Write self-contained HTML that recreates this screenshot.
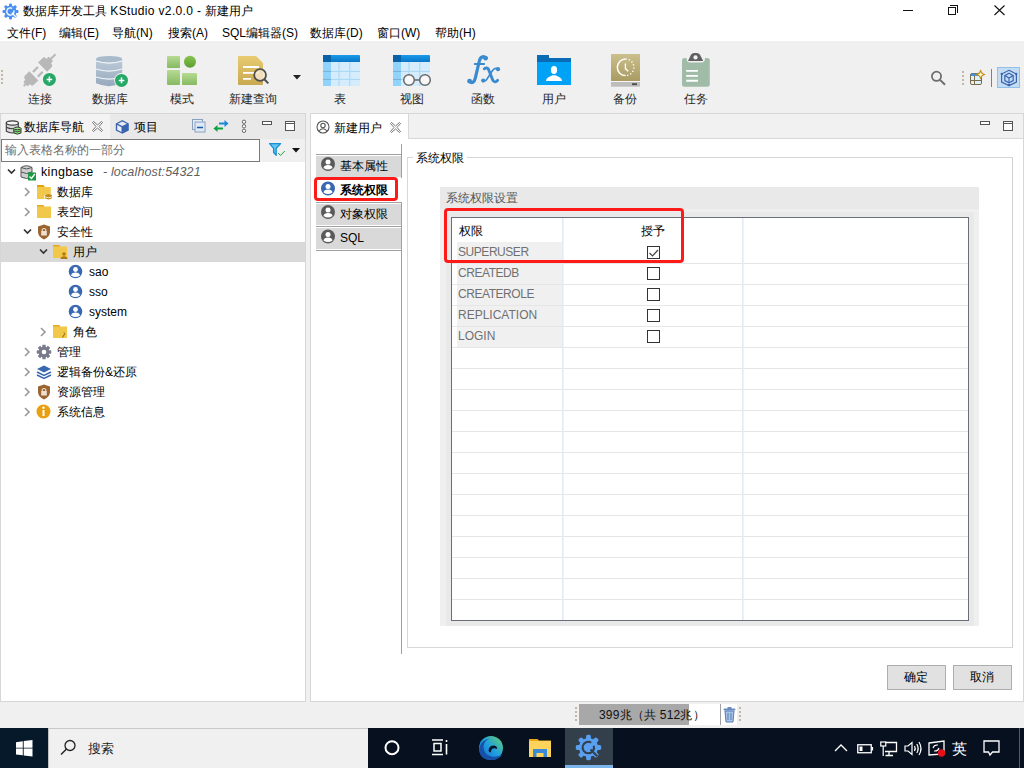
<!DOCTYPE html>
<html><head><meta charset="utf-8">
<style>
*{box-sizing:border-box}
html,body{margin:0;padding:0;width:1024px;height:768px;overflow:hidden;background:#f0f0f0;font-family:"Liberation Sans",sans-serif;font-size:12px;color:#000}
.a{position:absolute;white-space:nowrap;line-height:14px;}
svg{position:absolute;overflow:visible}
.tb{color:#262626;text-shadow:none}
.tr{color:#000}
</style></head><body>
<!-- ============ TITLE + MENU ============ -->
<div class="a" style="left:0;top:0;width:1024px;height:41px;background:#fff"></div>
<svg style="left:2px;top:3px" width="17" height="17" viewBox="0 0 17 17">
  <g fill="#4a90f0">
    <circle cx="8.5" cy="8.5" r="6"/>
    <g id="teeth">
    <rect x="7" y="0.5" width="3" height="3.5" rx="1"/>
    <rect x="7" y="13" width="3" height="3.5" rx="1"/>
    <rect x="0.5" y="7" width="3.5" height="3" rx="1"/>
    <rect x="13" y="7" width="3.5" height="3" rx="1"/>
    <rect x="7" y="0.5" width="3" height="3.5" rx="1" transform="rotate(45 8.5 8.5)"/>
    <rect x="7" y="13" width="3" height="3.5" rx="1" transform="rotate(45 8.5 8.5)"/>
    <rect x="0.5" y="7" width="3.5" height="3" rx="1" transform="rotate(45 8.5 8.5)"/>
    <rect x="13" y="7" width="3.5" height="3" rx="1" transform="rotate(45 8.5 8.5)"/>
    </g>
  </g>
  <path d="M10.2 5.4 A3.6 3.6 0 1 0 11.8 7.4" fill="none" stroke="#fff" stroke-width="1.3"/>
  <path d="M9.8 9.8 L14 14" stroke="#fff" stroke-width="1.3"/>
</svg>
<div class="a" style="left:23px;top:4px">数据库开发工具 <span style="letter-spacing:.35px">KStudio v2.0.0 - </span>新建用户</div>
<!-- window controls -->
<div class="a" style="left:903px;top:10px;width:10px;height:1px;background:#111"></div>
<div class="a" style="left:950px;top:5px;width:8px;height:8px;border:1px solid #111;border-left:none;border-bottom:none"></div>
<div class="a" style="left:948px;top:7px;width:8px;height:8px;border:1px solid #111;background:#fff"></div>
<svg style="left:994px;top:5px" width="11" height="10"><path d="M0.5 0.5 L10.5 10 M10.5 0.5 L0.5 10" stroke="#111" stroke-width="1.1"/></svg>

<div class="a" style="left:7px;top:26px">文件(F)</div>
<div class="a" style="left:59px;top:26px">编辑(E)</div>
<div class="a" style="left:112px;top:26px">导航(N)</div>
<div class="a" style="left:168px;top:26px">搜索(A)</div>
<div class="a" style="left:222px;top:26px">SQL编辑器(S)</div>
<div class="a" style="left:310px;top:26px">数据库(D)</div>
<div class="a" style="left:377px;top:26px">窗口(W)</div>
<div class="a" style="left:435px;top:26px">帮助(H)</div>

<!-- ============ TOOLBAR ============ -->
<!-- grip -->
<svg style="left:1px;top:70px" width="3" height="16"><g fill="#c4b8a4"><rect x="0" y="0" width="2" height="2"/><rect x="0" y="4" width="2" height="2"/><rect x="0" y="8" width="2" height="2"/><rect x="0" y="12" width="2" height="2"/></g></svg>

<!-- connect -->
<svg style="left:15px;top:48px" width="50" height="44" viewBox="15 48 50 44">
  <defs><linearGradient id="pg" gradientUnits="userSpaceOnUse" x1="0" y1="54" x2="0" y2="86"><stop offset="0" stop-color="#b8b8b8"/><stop offset="1" stop-color="#8a8a8a"/></linearGradient></defs>
  <g transform="translate(38.2 71.5) rotate(-45)" fill="url(#pg)">
    <path d="M6.2 -6.4 H12.5 Q14.8 -6.4 14.8 -4 V4 Q14.8 6.4 12.5 6.4 H6.2 Z"/>
    <rect x="14" y="-3.2" width="4" height="6.4" rx="1"/>
    <rect x="17" y="-1" width="7.5" height="2"/>
    <path d="M-6.2 -6.4 H-12.5 Q-14.8 -6.4 -14.8 -4 V4 Q-14.8 6.4 -12.5 6.4 H-6.2 Z"/>
    <rect x="-18" y="-3.2" width="4" height="6.4" rx="1"/>
    <rect x="-20.5" y="-1" width="3.5" height="2"/>
    <rect x="-4" y="-4.5" width="7" height="2.2"/>
    <rect x="-4" y="2.3" width="7" height="2.2"/>
  </g>
  <circle cx="49.4" cy="79.4" r="7.2" fill="#f4f4f4"/>
  <circle cx="49.4" cy="79.4" r="6.5" fill="#27a866"/>
  <path d="M49.4 76.6 V82.2 M46.6 79.4 H52.2" stroke="#fff" stroke-width="1.5"/>
</svg>
<!-- database -->
<svg style="left:88px;top:48px" width="50" height="44" viewBox="88 48 50 44">
  <defs><linearGradient id="dbg" x1="0" y1="0" x2="0" y2="1"><stop offset="0" stop-color="#bccbd9"/><stop offset="1" stop-color="#97a9bd"/></linearGradient></defs>
  <path d="M96 59.2 V83.3 Q109 89 122.2 83.3 V59.2 Z" fill="url(#dbg)"/>
  <ellipse cx="109.1" cy="59.2" rx="13.1" ry="3.3" fill="#a9bacb"/>
  <path d="M96 61 Q109 65.2 122.2 61 M96 69 Q109 73.2 122.2 69 M96 77 Q109 81.2 122.2 77" stroke="#f2f5f8" stroke-width="1.3" fill="none"/>
  <circle cx="121.5" cy="80.4" r="7.3" fill="#f6f6f6"/>
  <circle cx="121.5" cy="80.4" r="6.5" fill="#27a866"/>
  <path d="M121.5 77.6 V83.2 M118.7 80.4 H124.3" stroke="#fff" stroke-width="1.5"/>
</svg>
<!-- schema -->
<svg style="left:166px;top:55px" width="32" height="32" viewBox="0 0 32 32">
  <defs><linearGradient id="sg" x1="0" y1="0" x2="0" y2="1"><stop offset="0" stop-color="#b6da92"/><stop offset="1" stop-color="#86ba62"/></linearGradient>
  <linearGradient id="sc" x1="0" y1="0" x2="0" y2="1"><stop offset="0" stop-color="#88c44e"/><stop offset="1" stop-color="#5c9c30"/></linearGradient></defs>
  <rect x="1" y="1" width="13" height="12" rx="1" fill="url(#sg)"/>
  <circle cx="24" cy="6.8" r="6" fill="url(#sc)"/>
  <rect x="1" y="15" width="13" height="15" rx="1" fill="url(#sg)"/>
  <rect x="16" y="18" width="15" height="12" rx="1" fill="url(#sg)"/>
</svg>
<!-- new query -->
<svg style="left:237px;top:55px" width="34" height="32" viewBox="0 0 34 32">
  <defs><linearGradient id="qg" x1="0" y1="0" x2="0" y2="1"><stop offset="0" stop-color="#e8cc70"/><stop offset="1" stop-color="#c8a850"/></linearGradient></defs>
  <path d="M1 2 Q1 1 2 1 H19 L26 8 V29 Q26 30 25 30 H2 Q1 30 1 29 Z" fill="url(#qg)"/>
  <path d="M6 12 H22 M6 17.8 H22 M6 23.8 H14" stroke="#fff" stroke-width="1.8"/>
  <circle cx="23.1" cy="20" r="5.9" fill="rgba(246,232,204,.85)" stroke="#505050" stroke-width="1.8"/>
  <path d="M27.3 24.2 L31.3 28.4" stroke="#505050" stroke-width="2"/>
</svg>
<svg style="left:293px;top:75px" width="9" height="5"><path d="M0 0 H8 L4 4.5 Z" fill="#222"/></svg>
<!-- table -->
<svg style="left:323px;top:55px" width="38" height="32" viewBox="0 0 38 32">
  <defs><linearGradient id="thg" x1="0" y1="0" x2="0" y2="1"><stop offset="0" stop-color="#1c9aea"/><stop offset="1" stop-color="#0876c6"/></linearGradient></defs>
  <rect x="0" y="0" width="37" height="31" rx="1" fill="#d4ecfc"/>
  <rect x="0" y="7" width="8" height="24" fill="#90d4fc"/>
  <path d="M0 0 H36 Q37 0 37 1 V7 H0 Z" fill="url(#thg)"/>
  <rect x="0" y="0" width="8" height="7" fill="#0a62a8"/>
  <path d="M16 7 V31 M26.8 7 V31 M0 16.4 H37 M0 24.4 H37" stroke="#a8d6f2" stroke-width="1"/>
  <path d="M0 16.4 H8 M0 24.4 H8" stroke="#78aed4" stroke-width="1"/>
</svg>
<!-- view -->
<svg style="left:393px;top:55px" width="38" height="32" viewBox="0 0 38 32">
  <rect x="0" y="0" width="37" height="31" rx="1" fill="#d4ecfc"/>
  <rect x="0" y="7" width="8" height="24" fill="#90d4fc"/>
  <path d="M0 0 H36 Q37 0 37 1 V7 H0 Z" fill="url(#thg)"/>
  <rect x="0" y="0" width="8" height="7" fill="#0a62a8"/>
  <path d="M16 7 V31 M26.8 7 V31 M0 16.4 H37 M0 24.4 H37" stroke="#a8d6f2" stroke-width="1"/>
  <path d="M0 16.4 H8 M0 24.4 H8" stroke="#78aed4" stroke-width="1"/>
  <circle cx="16" cy="25" r="5.3" fill="#f8f8f8" stroke="#6a6a6a" stroke-width="1.5"/>
  <circle cx="32" cy="25" r="5.3" fill="#f8f8f8" stroke="#6a6a6a" stroke-width="1.5"/>
  <path d="M21.3 25 H26.7" stroke="#6a6a6a" stroke-width="1.5"/>
</svg>
<!-- fx -->
<svg style="left:460px;top:50px" width="46" height="40" viewBox="460 50 46 40">
  <g fill="none" stroke="#3a8ad0" stroke-linecap="round">
    <path d="M486 57.8 C483.5 55.6, 480.2 56.8, 479.2 61.5 L475.3 78.2 C474.3 82.6, 471.8 83.6, 469.6 81.4" stroke-width="3.2"/>
    <path d="M474.7 64 H484.2" stroke-width="1.8"/>
    <path d="M484.3 68.8 C486.5 67, 488.2 68, 489.2 71 L492.6 79.8 C493.6 82.4, 495.8 82.6, 497.6 80.4" stroke-width="2.9"/>
    <path d="M498 69.2 C496 67.6, 494 68.6, 492.2 71 L487 79 C486 80.8, 484.6 81.4, 483.2 80.6" stroke-width="1.6"/>
  </g>
  <g fill="#3a8ad0"><circle cx="485.6" cy="58.3" r="2.3"/><circle cx="469.6" cy="81.2" r="2.4"/><circle cx="498" cy="69.2" r="2.1"/><circle cx="483.2" cy="80.6" r="2.1"/></g>
</svg>
<!-- user -->
<svg style="left:536px;top:54px" width="36" height="32" viewBox="536 54 36 32">
  <rect x="537" y="55" width="12" height="4" fill="#0a6cb4"/>
  <rect x="537" y="58" width="34" height="4" fill="#0a6cb4"/>
  <rect x="537" y="62" width="34" height="23" fill="#00a2f6"/>
  <ellipse cx="554" cy="70" rx="3.1" ry="3.9" fill="#fff"/>
  <path d="M546 81 Q546 78.5 548.5 77.3 L552.5 75.2 H555.5 L559.5 77.3 Q562 78.5 562 81 Z" fill="#fff"/>
</svg>
<!-- backup -->
<svg style="left:606px;top:50px" width="40" height="40" viewBox="606 50 40 40">
  <defs><linearGradient id="bg1" x1="0" y1="0" x2="0" y2="1"><stop offset="0" stop-color="#cbbf8c"/><stop offset="1" stop-color="#a99b62"/></linearGradient></defs>
  <rect x="611" y="54" width="29" height="27" fill="url(#bg1)"/>
  <rect x="611" y="81" width="29" height="1" fill="#f4f4f4"/>
  <rect x="611" y="82" width="29" height="4.7" fill="#bdbdbd"/>
  <rect x="632" y="83.3" width="5" height="1.8" fill="#4a4a4a"/>
  <path d="M625.6 59 A8.3 8.3 0 0 0 625.6 75.6" fill="none" stroke="#fff" stroke-width="1.5"/>
  <path d="M625.6 59 A8.3 8.3 0 0 1 625.6 75.6" fill="none" stroke="#fff" stroke-width="1.5" stroke-dasharray="1.2 2.1"/>
  <path d="M625.4 63.5 V68.6 L628.2 71.3" fill="none" stroke="#fff" stroke-width="1.4"/>
</svg>
<!-- task -->
<svg style="left:678px;top:50px" width="36" height="40" viewBox="678 50 36 40">
  <rect x="682" y="58" width="27.8" height="28.7" rx="2.5" fill="#a0bca8"/>
  <path d="M686.5 58 Q686.5 62.5 690 62.5 H701.5 Q705 62.5 705 58 Z" fill="#f0f0f0"/>
  <path d="M688 60.9 L691 54.8 Q692 52.9 694.2 52.9 H696.8 Q699 52.9 700 54.8 L703.2 60.9 Z" fill="#606060"/>
  <circle cx="695.5" cy="57.4" r="2.1" fill="#f4f4f4"/>
  <path d="M686.2 70.9 H697.9 M686.2 75.9 H697.9 M686.2 80.8 H697.9" stroke="#fff" stroke-width="1.9"/>
</svg>

<div class="a tb" style="left:28px;top:92px">连接</div>
<div class="a tb" style="left:92px;top:92px">数据库</div>
<div class="a tb" style="left:170px;top:92px">模式</div>
<div class="a tb" style="left:229px;top:92px">新建查询</div>
<div class="a tb" style="left:334px;top:92px">表</div>
<div class="a tb" style="left:400px;top:92px">视图</div>
<div class="a tb" style="left:471px;top:92px">函数</div>
<div class="a tb" style="left:542px;top:92px">用户</div>
<div class="a tb" style="left:613px;top:92px">备份</div>
<div class="a tb" style="left:684px;top:92px">任务</div>

<!-- right toolbar -->
<svg style="left:930px;top:70px" width="17" height="17"><circle cx="6.5" cy="6.3" r="4.6" fill="none" stroke="#6e6e6e" stroke-width="1.8"/><path d="M9.8 9.6 L15 14.8" stroke="#6e6e6e" stroke-width="2"/></svg>
<svg style="left:962px;top:71px" width="2" height="15"><g fill="#c4b8a4"><rect x="0" y="0" width="2" height="2"/><rect x="0" y="4" width="2" height="2"/><rect x="0" y="8" width="2" height="2"/><rect x="0" y="12" width="2" height="2"/></g></svg>
<svg style="left:966px;top:68px" width="20" height="20" viewBox="966 68 20 20">
  <rect x="970.5" y="73.5" width="11" height="11" rx="1.5" fill="#ddf0fc" stroke="#7a6a48" stroke-width="1"/>
  <path d="M970.5 75 Q970.5 73.5 972 73.5 H980 Q981.5 73.5 981.5 75 V76 H970.5 Z" fill="#4a8ed0"/>
  <path d="M974.5 76 V84.5 M970.5 80.5 H981.5" stroke="#7a6a48" stroke-width="1"/>
  <path d="M980.6 70.2 Q981.2 73.9 984.9 74.5 Q981.2 75.1 980.6 78.8 Q980 75.1 976.3 74.5 Q980 73.9 980.6 70.2 Z" fill="#fff6d0" stroke="#c09020" stroke-width="1.1" stroke-linejoin="round"/>
</svg>
<div class="a" style="left:991px;top:69px;width:1px;height:18px;background:#808080"></div>
<div class="a" style="left:997px;top:67px;width:23px;height:21px;background:#c4dcf2;border:1px solid #90c0ee"></div>
<svg style="left:998px;top:68px" width="22" height="20" viewBox="998 68 22 20">
  <path d="M1009 70.3 L1016.4 74 V82 L1009 85.6 L1001.6 82 V74 Z" fill="none" stroke="#3a64b0" stroke-width="1.2"/>
  <circle cx="1001.8" cy="74" r="1.2" fill="#3a64b0"/><circle cx="1016.2" cy="74" r="1.2" fill="#3a64b0"/><circle cx="1009" cy="85" r="1.3" fill="#3a64b0"/>
  <path d="M1009 73.3 L1013.2 75.6 V80.6 L1009 82.9 L1004.8 80.6 V75.6 Z" fill="none" stroke="#3a64b0" stroke-width="1.2"/>
  <path d="M1004.8 75.6 L1009 78 L1013.2 75.6 M1009 78 V82.9" fill="none" stroke="#3a64b0" stroke-width="1.1"/>
</svg>

<!-- ============ LEFT PANEL ============ -->
<div class="a" style="left:0;top:113px;width:306px;height:589px;background:#fff;border:1px solid #d6d6d6"></div>
<div class="a" style="left:1px;top:114px;width:304px;height:25px;background:#e9e9e9"></div>
<div class="a" style="left:1px;top:114px;width:109px;height:25px;background:#f3f3f3"></div>
<!-- tab 1 icon -->
<svg style="left:4px;top:119px" width="20" height="17" viewBox="4 119 20 17">
  <path d="M6.3 123 V131.3 Q12.3 134.6 18.3 131.3 V123 Z" fill="#d8d8d8" stroke="#3e3e3e" stroke-width="1.1"/>
  <ellipse cx="12.3" cy="123" rx="6" ry="2.1" fill="#f6f6f6" stroke="#3e3e3e" stroke-width="1.1"/>
  <path d="M6.3 127.3 Q12.3 130.3 18.3 127.3" fill="none" stroke="#3e3e3e" stroke-width="1.1"/>
  <path d="M13.8 128.4 V133 Q17.4 135.3 21 133 V128.4 Z" fill="#7ad66a" stroke="#3e3e3e" stroke-width="1"/>
  <ellipse cx="17.4" cy="128.4" rx="3.6" ry="1.3" fill="#9ae88a" stroke="#3e3e3e" stroke-width="1"/>
  <path d="M13.8 130.8 Q17.4 132.8 21 130.8" fill="none" stroke="#3e3e3e" stroke-width="0.9"/>
</svg>
<div class="a" style="left:24px;top:120px">数据库导航</div>
<svg style="left:92px;top:121px" width="11" height="11" viewBox="0 0 11 11"><path d="M0.5 1.5 L1.5 0.5 L5.5 4 L9.5 0.5 L10.5 1.5 L7 5.5 L10.5 9.5 L9.5 10.5 L5.5 7 L1.5 10.5 L0.5 9.5 L4 5.5 Z" fill="#fff" stroke="#666" stroke-width="0.9" stroke-linejoin="round"/></svg>
<svg style="left:114px;top:118px" width="17" height="17" viewBox="114 118 17 17">
  <path d="M122.3 120 L128.8 123.4 V130.4 L122.3 133.7 L115.8 130.4 V123.4 Z" fill="#3a64b0"/>
  <path d="M122.3 121.5 L126.9 123.8 L122.3 126.1 L117.7 123.8 Z" fill="#e6ebf4"/>
  <path d="M117.2 125 L121.5 127.2 V132 L117.2 129.8 Z" fill="#eceff5"/>
</svg>
<div class="a" style="left:134px;top:120px">项目</div>
<!-- panel tools -->
<svg style="left:192px;top:119px" width="14" height="14"><rect x="0.5" y="0.5" width="10" height="10" fill="#e4ecf4" stroke="#8aa0c0"/><rect x="3" y="3" width="10" height="10" fill="#dfe9f4" stroke="#8aa0c0"/><path d="M5 8.5 H11" stroke="#1a5aa8" stroke-width="1.5"/></svg>
<svg style="left:213px;top:120px" width="16" height="12"><path d="M3.5 8.5 H10" stroke="#10a040" stroke-width="2"/><path d="M0.5 8.5 L4.5 5 V12 Z" fill="#10a040"/><path d="M6 3.5 H12" stroke="#1a88d8" stroke-width="2"/><path d="M15.5 3.5 L11.5 0 V7 Z" fill="#1a88d8"/></svg>
<svg style="left:241px;top:119px" width="6" height="15"><circle cx="3" cy="2.8" r="1.7" fill="#fff" stroke="#666" stroke-width="1"/><circle cx="3" cy="7.3" r="1.7" fill="#fff" stroke="#666" stroke-width="1"/><circle cx="3" cy="11.8" r="1.7" fill="#fff" stroke="#666" stroke-width="1"/></svg>
<div class="a" style="left:262px;top:121px;width:10px;height:4px;border:1px solid #555;background:#fff"></div>
<div class="a" style="left:285px;top:121px;width:10px;height:10px;border:1px solid #555;background:#fff;box-shadow:inset 0 1px 0 #fff,inset 0 2px 0 #555"></div>

<div class="a" style="left:1px;top:139px;width:304px;height:23px;background:#f0f0f0"></div>
<div class="a" style="left:1px;top:139px;width:259px;height:23px;background:#fff;border:1px solid #7a7a7a"></div>
<div class="a" style="left:5px;top:143px;color:#6d6d6d">输入表格名称的一部分</div>
<svg style="left:266px;top:140px" width="22" height="18" viewBox="266 140 22 18">
  <path d="M269.6 143.6 H280.6 L276.2 148.3 V155.3 L273.6 152.5 V148.3 Z" fill="#62c6f0" stroke="#1a8ed6" stroke-width="1.3" stroke-linejoin="round"/>
  <path d="M278.2 153 L280.5 155.4 L284.8 151" fill="none" stroke="#20a040" stroke-width="1"/>
</svg>
<svg style="left:292px;top:148px" width="8" height="5"><path d="M0 0 H8 L4 4.5 Z" fill="#111"/></svg>

<!-- tree -->
<div class="a" style="left:1px;top:242px;width:304px;height:20px;background:#d9d9d9"></div>
<svg style="left:0;top:162px" width="306" height="270" viewBox="0 0 306 270">
  <g fill="none" stroke="#333" stroke-width="1.7">
    <path d="M8 7.5 L11.5 11 L15 7.5"/>
    <path d="M24 67.5 L27.5 71 L31 67.5"/>
    <path d="M40 87.5 L43.5 91 L47 87.5"/>
  </g>
  <g fill="none" stroke="#999" stroke-width="1.6">
    <path d="M25 26 L29 30 L25 34"/>
    <path d="M25 46 L29 50 L25 54"/>
    <path d="M41 166 L45 170 L41 174"/>
    <path d="M25 186 L29 190 L25 194"/>
    <path d="M25 206 L29 210 L25 214"/>
    <path d="M25 226 L29 230 L25 234"/>
    <path d="M25 246 L29 250 L25 254"/>
  </g>
</svg>
<!-- kingbase icon -->
<svg style="left:20px;top:164px" width="17" height="17" viewBox="0 0 17 17">
  <path d="M1 3.5 Q6.5 0 12 3.5 V13 Q6.5 16 1 13 Z" fill="#cfcfcf" stroke="#555" stroke-width="1"/>
  <path d="M1 3.5 Q6.5 6.5 12 3.5 M1 8 Q6.5 11 12 8" stroke="#555" stroke-width="1" fill="none"/>
  <rect x="8" y="8.5" width="8" height="8" fill="#1a9a40"/>
  <path d="M9.5 12.5 L11.5 14.5 L14.8 10" stroke="#fff" stroke-width="1.3" fill="none"/>
</svg>
<div class="a" style="left:41px;top:165px;font-size:12.5px;letter-spacing:.3px">kingbase</div>
<div class="a" style="left:103px;top:165px;font-style:italic;color:#5f5f5f;font-size:12.5px;letter-spacing:.15px">- localhost:54321</div>
<!-- folder db -->
<svg style="left:37px;top:184px" width="17" height="17" viewBox="0 0 17 17">
  <path d="M0 1 H6.3 L7.8 3 H13.8 V15 H0 Z" fill="#f2c84a"/><path d="M0 1 H6.3 L7.8 3 H0 Z" fill="#e2a20a"/>
  <path d="M7.3 11.2 V14.5 Q11.5 17.4 15.7 14.5 V11.2 Q11.5 8.2 7.3 11.2 Z" fill="#fff"/>
  <path d="M8 11.2 V14.3 Q11.5 16.6 15 14.3 V11.2 Q11.5 8.9 8 11.2 Z" fill="#c48c10"/>
  <path d="M8 12.9 Q11.5 14.6 15 12.9" fill="none" stroke="#fff" stroke-width="0.8"/>
</svg>
<div class="a" style="left:57px;top:185px">数据库</div>
<svg style="left:37px;top:204px" width="17" height="16" viewBox="0 0 17 16"><path d="M0 1 H6 L7.5 2.5 H14 V14 H0 Z" fill="#f2c84a"/><path d="M0 1 H6 L7.5 2.5 H0 Z" fill="#e2a82a"/></svg>
<div class="a" style="left:57px;top:205px">表空间</div>
<svg style="left:37px;top:224px" width="14" height="16" viewBox="0 0 14 16"><path d="M7 0.5 L13 2.5 V8 Q13 13 7 15.5 Q1 13 1 8 V2.5 Z" fill="#9a6530"/><rect x="4.2" y="7" width="5.6" height="4.5" fill="#f0e0d0"/><path d="M5.2 7 V5.5 Q7 3.5 8.8 5.5 V7" stroke="#f0e0d0" stroke-width="1.1" fill="none"/></svg>
<div class="a" style="left:57px;top:225px">安全性</div>
<svg style="left:53px;top:244px" width="17" height="16" viewBox="0 0 17 16">
  <path d="M0 1 H6 L7.5 2.5 H14 V14 H0 Z" fill="#f2c84a"/><path d="M0 1 H6 L7.5 2.5 H0 Z" fill="#e2a82a"/>
  <circle cx="11" cy="10" r="1.8" fill="#b07818"/>
  <path d="M7.5 15 Q7.5 12.2 11 12.2 Q14.5 12.2 14.5 15 Z" fill="#b07818"/>
</svg>
<div class="a" style="left:73px;top:245px">用户</div>
<!-- users -->
<svg style="left:68px;top:264px" width="16" height="60" viewBox="0 0 16 60">
  <g id="u1">
  <circle cx="7.5" cy="7.5" r="6.8" fill="#3a68b0"/>
  <circle cx="7.5" cy="5.5" r="2.4" fill="#fff"/>
  <path d="M3 11.5 Q3.5 8.5 7.5 8.5 Q11.5 8.5 12 11.5 Q7.5 14.5 3 11.5 Z" fill="#fff"/>
  </g>
  <use href="#u1" y="20"/>
  <use href="#u1" y="40"/>
</svg>
<div class="a" style="left:89px;top:265px">sao</div>
<div class="a" style="left:89px;top:285px">sso</div>
<div class="a" style="left:89px;top:305px">system</div>
<svg style="left:53px;top:324px" width="17" height="16" viewBox="0 0 17 16">
  <path d="M0 1 H6 L7.5 2.5 H14 V14 H0 Z" fill="#f2c84a"/><path d="M0 1 H6 L7.5 2.5 H0 Z" fill="#e2a82a"/>
  <path d="M11 8.5 Q12.5 9.5 11 11 L9.5 13.5" stroke="#8a6010" stroke-width="1" fill="none"/>
</svg>
<div class="a" style="left:73px;top:325px">角色</div>
<svg style="left:36px;top:344px" width="16" height="16" viewBox="0 0 16 16">
  <g fill="#7a7a8e">
  <circle cx="8" cy="8" r="5.3"/>
  <rect x="6.3" y="0.8" width="3.4" height="3.5"/><rect x="6.3" y="11.7" width="3.4" height="3.5"/>
  <rect x="0.8" y="6.3" width="3.5" height="3.4"/><rect x="11.7" y="6.3" width="3.5" height="3.4"/>
  <g transform="rotate(45 8 8)"><rect x="6.3" y="0.8" width="3.4" height="3.5"/><rect x="6.3" y="11.7" width="3.4" height="3.5"/><rect x="0.8" y="6.3" width="3.5" height="3.4"/><rect x="11.7" y="6.3" width="3.5" height="3.4"/></g>
  </g>
  <circle cx="8" cy="8" r="2.3" fill="#fff"/>
</svg>
<div class="a" style="left:57px;top:345px">管理</div>
<svg style="left:36px;top:364px" width="16" height="16" viewBox="0 0 16 16">
  <path d="M1 5 L8 1.5 L15 5 L8 8.5 Z" fill="#3a68b0"/>
  <path d="M1 8 L8 11.5 L15 8" stroke="#3a68b0" stroke-width="1.5" fill="none"/>
  <path d="M1 11 L8 14.5 L15 11" stroke="#3a68b0" stroke-width="1.5" fill="none"/>
</svg>
<div class="a" style="left:57px;top:365px">逻辑备份&amp;还原</div>
<svg style="left:37px;top:384px" width="14" height="16" viewBox="0 0 14 16"><path d="M7 0.5 L13 2.5 V8 Q13 13 7 15.5 Q1 13 1 8 V2.5 Z" fill="#9a6530"/><rect x="4.2" y="7" width="5.6" height="4.5" fill="#f0e0d0"/><path d="M5.2 7 V5.5 Q7 3.5 8.8 5.5 V7" stroke="#f0e0d0" stroke-width="1.1" fill="none"/></svg>
<div class="a" style="left:57px;top:385px">资源管理</div>
<svg style="left:36px;top:404px" width="16" height="16" viewBox="0 0 16 16"><circle cx="7.5" cy="7.5" r="7" fill="#e8a010"/><rect x="6.5" y="6" width="2" height="6" fill="#fff"/><circle cx="7.5" cy="3.8" r="1.2" fill="#fff"/></svg>
<div class="a" style="left:57px;top:405px">系统信息</div>

<!-- ============ RIGHT EDITOR ============ -->
<div class="a" style="left:310px;top:113px;width:714px;height:589px;background:#fff;border:1px solid #d6d6d6"></div>
<div class="a" style="left:311px;top:114px;width:712px;height:25px;background:#f1f1f1;border-bottom:1px solid #d8d8d8"></div>
<div class="a" style="left:311px;top:114px;width:98px;height:25px;background:#fff;border-right:1px solid #d8d8d8"></div>
<svg style="left:316px;top:120px" width="14" height="14"><circle cx="7" cy="7" r="6" fill="none" stroke="#555" stroke-width="1.1"/><circle cx="7" cy="5.5" r="2.2" fill="none" stroke="#555" stroke-width="1.1"/><path d="M3 11 Q7 6.5 11 11" fill="none" stroke="#555" stroke-width="1.1"/></svg>
<div class="a" style="left:334px;top:121px">新建用户</div>
<svg style="left:390px;top:122px" width="11" height="11" viewBox="0 0 11 11"><path d="M0.5 1.5 L1.5 0.5 L5.5 4 L9.5 0.5 L10.5 1.5 L7 5.5 L10.5 9.5 L9.5 10.5 L5.5 7 L1.5 10.5 L0.5 9.5 L4 5.5 Z" fill="#fff" stroke="#666" stroke-width="0.9" stroke-linejoin="round"/></svg>
<div class="a" style="left:980px;top:121px;width:10px;height:4px;border:1px solid #555;background:#fff"></div>
<div class="a" style="left:1003px;top:121px;width:10px;height:10px;border:1px solid #555;background:#fff;box-shadow:inset 0 1px 0 #fff,inset 0 2px 0 #555"></div>

<!-- vertical tabs -->
<div class="a" style="left:401px;top:144px;width:1px;height:510px;background:#a0a0a0"></div>
<div class="a" style="left:316px;top:154px;width:86px;height:24px;background:#d9d9d9;border-top:1px solid #a0a0a0;border-right:1px solid #a0a0a0;box-shadow:inset 0 1px 0 #fff,inset 0 -1px 0 #fff"></div>
<div class="a" style="left:316px;top:202px;width:86px;height:24px;background:#d9d9d9;border-top:1px solid #a0a0a0;border-right:1px solid #a0a0a0;box-shadow:inset 0 1px 0 #fff,inset 0 -1px 0 #fff"></div>
<div class="a" style="left:316px;top:226px;width:86px;height:25px;background:#d9d9d9;border-top:1px solid #a0a0a0;border-bottom:1px solid #a0a0a0;border-right:1px solid #a0a0a0;box-shadow:inset 0 1px 0 #fff,inset 0 -1px 0 #fff"></div>
<div class="a" style="left:316px;top:178px;width:86px;height:24px;background:#fff"></div>
<svg style="left:320px;top:156px" width="16" height="90" viewBox="0 0 16 90">
  <g id="vt"><circle cx="8" cy="8" r="7" fill="#5a5a5a"/><circle cx="8" cy="6" r="2.5" fill="#fff"/><path d="M3.5 12 Q4 9 8 9 Q12 9 12.5 12 Q8 15 3.5 12 Z" fill="#fff"/></g>
  <use href="#vt" y="48"/>
  <use href="#vt" y="72.5"/>
  <g transform="translate(0 24.5)"><circle cx="8" cy="8" r="7" fill="#3a68b0"/><circle cx="8" cy="6" r="2.5" fill="#fff"/><path d="M3.5 12 Q4 9 8 9 Q12 9 12.5 12 Q8 15 3.5 12 Z" fill="#fff"/></g>
</svg>
<div class="a" style="left:340px;top:159px">基本属性</div>
<div class="a" style="left:340px;top:183px;font-weight:bold">系统权限</div>
<div class="a" style="left:340px;top:207px">对象权限</div>
<div class="a" style="left:340px;top:231px">SQL</div>
<div class="a" style="left:314px;top:177px;width:84px;height:24px;border:3px solid #ff1a1a;border-radius:4px"></div>

<!-- fieldset -->
<div class="a" style="left:407px;top:157px;width:606px;height:491px;border:1px solid #d8d8d8;border-right-color:#d0d0d0"></div>
<div class="a" style="left:413px;top:151px;background:#fff;padding:0 3px">系统权限</div>

<!-- gray group -->
<div class="a" style="left:440px;top:187px;width:539px;height:439px;background:#efefef"></div>
<div class="a" style="left:440px;top:187px;width:539px;height:22px;background:#e9e9e9"></div>
<div class="a" style="left:446px;top:212px;width:528px;height:414px;background:#e9e9e9"></div>
<div class="a" style="left:446px;top:191px;color:#555">系统权限设置</div>

<!-- table -->
<div class="a" style="left:451px;top:217px;width:518px;height:404px;background:#fff;border:1px solid #6a6e78"></div>
<div class="a" style="left:457px;top:242px;width:106px;height:105px;background:#f0f0f0"></div>
<svg style="left:452px;top:218px" width="516" height="402" viewBox="0 0 516 402">
  <g stroke="#e6e6e6" stroke-width="1">
    <path d="M0 45.5 H516 M0 66.5 H516 M0 87.5 H516 M0 108.5 H516 M0 129.5 H516 M0 150.5 H516 M0 171.5 H516 M0 192.5 H516 M0 213.5 H516 M0 234.5 H516 M0 255.5 H516 M0 276.5 H516 M0 297.5 H516 M0 318.5 H516 M0 339.5 H516 M0 360.5 H516 M0 381.5 H516"/>
  </g>
  <path d="M110.8 0 V402 M290.8 0 V402" stroke="#e2eaf4" stroke-width="1.5"/>
</svg>
<div class="a" style="left:459px;top:224px">权限</div>
<div class="a" style="left:641px;top:224px">授予</div>
<div class="a" style="left:458px;top:245px;color:#707070;letter-spacing:-.45px;text-shadow:none">SUPERUSER</div>
<div class="a" style="left:458px;top:266px;color:#707070;letter-spacing:-.45px;text-shadow:none">CREATEDB</div>
<div class="a" style="left:458px;top:287px;color:#707070;letter-spacing:-.45px;text-shadow:none">CREATEROLE</div>
<div class="a" style="left:458px;top:308px;color:#707070;text-shadow:none">REPLICATION</div>
<div class="a" style="left:458px;top:329px;color:#707070;text-shadow:none">LOGIN</div>
<div class="a" style="left:647px;top:246px;width:13px;height:13px;border:1px solid #333;background:#fff"></div>
<svg style="left:649px;top:249px" width="10" height="8"><path d="M0.5 4 L3.5 7 L9 1" fill="none" stroke="#444" stroke-width="1.2"/></svg>
<div class="a" style="left:647px;top:267px;width:13px;height:13px;border:1px solid #333;background:#fff"></div>
<div class="a" style="left:647px;top:288px;width:13px;height:13px;border:1px solid #333;background:#fff"></div>
<div class="a" style="left:647px;top:309px;width:13px;height:13px;border:1px solid #333;background:#fff"></div>
<div class="a" style="left:647px;top:330px;width:13px;height:13px;border:1px solid #333;background:#fff"></div>
<!-- red box on table -->
<div class="a" style="left:444px;top:208px;width:240px;height:55px;border:3px solid #ff1a1a;border-radius:4px"></div>

<!-- buttons -->
<div class="a" style="left:887px;top:665px;width:59px;height:25px;background:#e1e1e1;border:1px solid #adadad"></div>
<div class="a" style="left:904px;top:670px">确定</div>
<div class="a" style="left:953px;top:665px;width:59px;height:25px;background:#e1e1e1;border:1px solid #adadad"></div>
<div class="a" style="left:970px;top:670px">取消</div>

<!-- ============ STATUS BAR ============ -->
<svg style="left:575px;top:707px" width="2" height="16"><g fill="#c4b8a4"><rect x="0" y="0" width="2" height="2"/><rect x="0" y="4" width="2" height="2"/><rect x="0" y="8" width="2" height="2"/><rect x="0" y="12" width="2" height="2"/></g></svg>
<div class="a" style="left:579px;top:704px;width:158px;height:21px;background:#fff"></div>
<div class="a" style="left:579px;top:704px;width:110px;height:21px;background:#a8a8a8"></div>
<div class="a" style="left:720px;top:704px;width:1px;height:21px;background:#a0a0a0"></div>
<div class="a" style="left:599px;top:708px;color:#111;letter-spacing:.2px">399兆（共 512兆）</div>
<svg style="left:723px;top:707px" width="13" height="16" viewBox="0 0 13 16"><rect x="0.5" y="1.5" width="12" height="2" rx="1" fill="#6a8ac0"/><rect x="4.5" y="0" width="4" height="2" fill="#6a8ac0"/><path d="M2 4 H11 L10 15 H3 Z" fill="#a8c4e8" stroke="#5a7ab0" stroke-width="1"/><path d="M5 6 V13 M8 6 V13" stroke="#5a7ab0" stroke-width="1"/></svg>
<svg style="left:739px;top:707px" width="2" height="16"><g fill="#c4b8a4"><rect x="0" y="0" width="2" height="2"/><rect x="0" y="4" width="2" height="2"/><rect x="0" y="8" width="2" height="2"/><rect x="0" y="12" width="2" height="2"/></g></svg>

<!-- ============ TASKBAR ============ -->
<div class="a" style="left:0;top:728px;width:1024px;height:40px;background:#06101e"></div>
<div class="a" style="left:0;top:728px;width:48px;height:40px;background:#05192a"></div>
<div class="a" style="left:48px;top:728px;width:320px;height:40px;background:#f0f0f0;border-top:1px solid #c8c8c8;border-left:1px solid #c0c0c0"></div>
<svg style="left:16px;top:740px" width="17" height="17" viewBox="0 0 17 17"><path d="M0 2.2 L6.8 1.2 V7.7 H0 Z M7.7 1.1 L16.5 0 V7.7 H7.7 Z M0 8.6 H6.8 V15.3 L0 14.4 Z M7.7 8.6 H16.5 V16.6 L7.7 15.4 Z" fill="#fff"/></svg>
<svg style="left:60px;top:739px" width="17" height="17"><circle cx="10" cy="6.5" r="5" fill="none" stroke="#222" stroke-width="1.3"/><path d="M6.5 10 L1 15.5" stroke="#222" stroke-width="1.5"/></svg>
<div class="a" style="left:88px;top:742px;font-size:13px;color:#222">搜索</div>
<svg style="left:384px;top:739px" width="17" height="17"><circle cx="8" cy="8.7" r="6.5" fill="none" stroke="#fff" stroke-width="2"/></svg>
<svg style="left:431px;top:739px" width="18" height="17" viewBox="0 0 18 17"><path d="M1 1 H12 M1 15.5 H12 M3 4.5 H10 V12 H3 Z" fill="none" stroke="#fff" stroke-width="1.5"/><path d="M15.5 1 V3 M15.5 5 V15.5" stroke="#fff" stroke-width="1.6"/></svg>
<svg style="left:476px;top:733px" width="30" height="30" viewBox="476 733 30 30">
  <defs><linearGradient id="eg" x1="0" y1="1" x2="1" y2="0"><stop offset="0" stop-color="#1468c8"/><stop offset="0.5" stop-color="#1e9ee0"/><stop offset="1" stop-color="#6ad46a"/></linearGradient></defs>
  <circle cx="491" cy="748" r="12" fill="url(#eg)"/>
  <path d="M479.2 749 Q479.5 760 491 760 Q498.5 760 502.5 754.5 Q497 757.5 491.5 756.5 Q483.5 755 483.5 746.5 Q484 740.5 490 738.5 Q480.5 740 479.2 749 Z" fill="#1650a8"/>
  <path d="M488.5 750.5 Q489 745.5 494 745.5 Q497.5 746 497 749 Q494 747.5 492 749 Q490.5 751 491 752.5 Q489 752.5 488.5 750.5 Z" fill="#07152a"/>
</svg>
<svg style="left:528px;top:737px" width="24" height="22" viewBox="528 737 24 22">
  <path d="M529 739 H537.5 L539 740.5 H551 V757 H529 Z" fill="#e8a818"/>
  <rect x="529" y="741" width="22" height="16" fill="#fed35c"/>
  <path d="M533 757 V749 H547 V757 H543.5 V753 H536.5 V757 Z" fill="#3a8ad8"/>
</svg>
<div class="a" style="left:565px;top:728px;width:48px;height:40px;background:#343f4c"></div>
<div class="a" style="left:565px;top:765px;width:48px;height:3px;background:#7cb4ec"></div>
<svg style="left:575px;top:734px" width="27" height="27" viewBox="0 0 17 17">
  <g fill="#5aa0f0">
    <circle cx="8.5" cy="8.5" r="6"/>
    <rect x="7" y="0.5" width="3" height="3.5" rx="1"/>
    <rect x="7" y="13" width="3" height="3.5" rx="1"/>
    <rect x="0.5" y="7" width="3.5" height="3" rx="1"/>
    <rect x="13" y="7" width="3.5" height="3" rx="1"/>
    <rect x="7" y="0.5" width="3" height="3.5" rx="1" transform="rotate(45 8.5 8.5)"/>
    <rect x="7" y="13" width="3" height="3.5" rx="1" transform="rotate(45 8.5 8.5)"/>
    <rect x="0.5" y="7" width="3.5" height="3" rx="1" transform="rotate(45 8.5 8.5)"/>
    <rect x="13" y="7" width="3.5" height="3" rx="1" transform="rotate(45 8.5 8.5)"/>
  </g>
  <path d="M10.2 5.4 A3.6 3.6 0 1 0 11.8 7.4" fill="none" stroke="#343f4c" stroke-width="1.3"/>
  <path d="M9.8 9.8 L14 14" stroke="#343f4c" stroke-width="1.3"/>
</svg>
<!-- tray -->
<svg style="left:834px;top:744px" width="14" height="8"><path d="M1 7 L7 1 L13 7" fill="none" stroke="#fff" stroke-width="1.3"/></svg>
<svg style="left:857px;top:744px" width="17" height="10"><rect x="0.75" y="0.75" width="13.5" height="8" fill="none" stroke="#fff" stroke-width="1.3"/><rect x="2.5" y="2.5" width="3" height="4.5" fill="#fff"/><rect x="14.5" y="3" width="1.6" height="3.5" fill="#fff"/></svg>
<svg style="left:880px;top:741px" width="18" height="16" viewBox="0 0 18 16"><path d="M5 1.5 H16.5 V10.5 H5 M9 10.5 V14 M5.5 14.5 H13" fill="none" stroke="#fff" stroke-width="1.3"/><rect x="0.75" y="1" width="5" height="4" fill="#06101e" stroke="#fff" stroke-width="1.2"/><path d="M3.2 5 V15" stroke="#fff" stroke-width="1.2"/></svg>
<svg style="left:904px;top:741px" width="18" height="15" viewBox="0 0 18 15"><path d="M1 5 H4 L8 1.5 V13.5 L4 10 H1 Z" fill="none" stroke="#fff" stroke-width="1.2"/><path d="M10.5 5 Q12 7.5 10.5 10 M12.8 3 Q15.5 7.5 12.8 12 M15 1 Q19 7.5 15 14" fill="none" stroke="#fff" stroke-width="1.2"/></svg>
<svg style="left:928px;top:740px" width="19" height="18" viewBox="0 0 19 18"><path d="M1 3 L16 1 V14 L1 15 Z" fill="none" stroke="#fff" stroke-width="1.3"/><path d="M5 8 Q6 4.5 10 5 M11 8 Q10 11.5 6 11" fill="none" stroke="#fff" stroke-width="1.1"/><circle cx="13.5" cy="13" r="3.7" fill="#e8101a"/></svg>
<div class="a" style="left:952px;top:740px;font-size:15px;color:#fff;line-height:17px">英</div>
<svg style="left:983px;top:740px" width="17" height="17" viewBox="0 0 17 17"><path d="M1 1 H16 V12 H9.5 L7 15 L5.5 12 H1 Z" fill="none" stroke="#fff" stroke-width="1.3"/></svg>
<div class="a" style="left:1019px;top:728px;width:1px;height:40px;background:#555c66"></div>
</body></html>
